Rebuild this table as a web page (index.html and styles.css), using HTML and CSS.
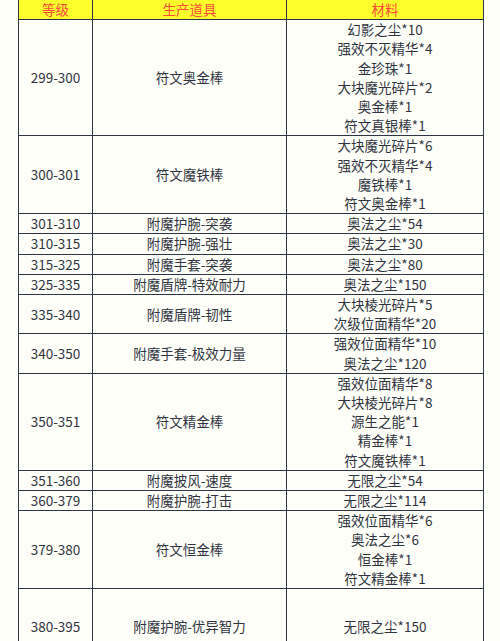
FILE: index.html
```html
<!DOCTYPE html>
<html lang="zh-CN">
<head>
<meta charset="utf-8">
<link rel="stylesheet" href="styles.css">
</head>
<body>
<table class="recipes">
  <colgroup>
    <col class="c-level">
    <col class="c-item">
    <col class="c-mat">
  </colgroup>
  <thead>
    <tr><th>等级</th><th>生产道具</th><th>材料</th></tr>
  </thead>
  <tbody>
    <tr><td>299-300</td><td>符文奥金棒</td><td>幻影之尘*10<br>强效不灭精华*4<br>金珍珠*1<br>大块魔光碎片*2<br>奥金棒*1<br>符文真银棒*1</td></tr>
    <tr><td>300-301</td><td>符文魔铁棒</td><td>大块魔光碎片*6<br>强效不灭精华*4<br>魔铁棒*1<br>符文奥金棒*1</td></tr>
    <tr><td>301-310</td><td>附魔护腕-突袭</td><td>奥法之尘*54</td></tr>
    <tr><td>310-315</td><td>附魔护腕-强壮</td><td>奥法之尘*30</td></tr>
    <tr><td>315-325</td><td>附魔手套-突袭</td><td>奥法之尘*80</td></tr>
    <tr><td>325-335</td><td>附魔盾牌-特效耐力</td><td>奥法之尘*150</td></tr>
    <tr><td>335-340</td><td>附魔盾牌-韧性</td><td>大块棱光碎片*5<br>次级位面精华*20</td></tr>
    <tr><td>340-350</td><td>附魔手套-极效力量</td><td>强效位面精华*10<br>奥法之尘*120</td></tr>
    <tr><td>350-351</td><td>符文精金棒</td><td>强效位面精华*8<br>大块棱光碎片*8<br>源生之能*1<br>精金棒*1<br>符文魔铁棒*1</td></tr>
    <tr><td>351-360</td><td>附魔披风-速度</td><td>无限之尘*54</td></tr>
    <tr><td>360-379</td><td>附魔护腕-打击</td><td>无限之尘*114</td></tr>
    <tr><td>379-380</td><td>符文恒金棒</td><td>强效位面精华*6<br>奥法之尘*6<br>恒金棒*1<br>符文精金棒*1</td></tr>
    <tr class="tall"><td>380-395</td><td>附魔护腕-优异智力</td><td>无限之尘*150</td></tr>
  </tbody>
</table>
</body>
</html>
```
FILE: styles.css
```css
html, body {
  margin: 0;
  padding: 0;
  background: #fffffa;
}
body {
  font-family: "Noto Sans CJK SC", "Noto Sans", sans-serif;
  font-size: 13.5px;
  color: #2f3440;
}
.recipes {
  border-collapse: collapse;
  margin: -1px 0 0 18px;
  width: 465px;
  table-layout: fixed;
}
.c-level { width: 74px; }
.c-item { width: 194px; }
.c-mat { width: 197px; }
.recipes th,
.recipes td {
  border: 1px solid #2e3646;
  padding: 0;
  text-align: center;
  vertical-align: middle;
  line-height: 19.2px;
  font-weight: normal;
  white-space: nowrap;
}
.recipes th {
  background: #ffff2e;
  color: #ff4a3a;
  height: 19px;
}
.recipes .tall td {
  height: 76px;
}
```
